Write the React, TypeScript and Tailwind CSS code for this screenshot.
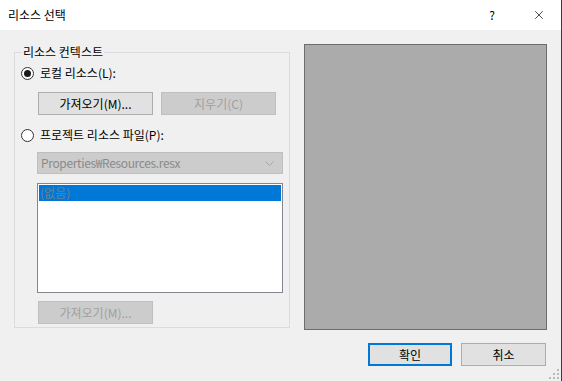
import { X } from 'lucide-react';

const font = { fontFamily: '"Noto Sans CJK KR", "Noto Sans", sans-serif' };

function Radio({ checked, label }: { checked?: boolean; label: string }) {
  return (
    <div className="flex items-center h-[16px] pl-[6px] gap-[6px]">
      <div className="w-[13px] h-[13px] rounded-full border border-[#333333] bg-white flex items-center justify-center">
        {checked && <div className="w-[7px] h-[7px] rounded-full bg-[#1a1a1a]" />}
      </div>
      <span className="text-[12px] leading-[16px] text-black">{label}</span>
    </div>
  );
}

function Btn({ label, disabled, primary, w }: { label: string; disabled?: boolean; primary?: boolean; w: string }) {
  const cls = disabled
    ? 'bg-[#cccccc] border border-[#bfbfbf] text-[#a0a0a0]'
    : primary
      ? 'bg-[#e1e1e1] border-2 border-[#0078d7] text-black'
      : 'bg-[#e1e1e1] border border-[#adadad] text-black';
  return (
    <div className={`${w} h-[23px] flex items-center justify-center text-[12px] leading-none ${cls}`}>
      {label}
    </div>
  );
}

export default function App() {
  return (
    <div className="w-[562px] h-[381px] bg-[#f0f0f0] border-r border-[#3a3a3a] flex flex-col relative" style={font}>
      <div className="h-[30px] bg-white flex items-center pl-[8px] shrink-0">
        <span className="text-[12px] text-black">리소스 선택</span>
        <div className="ml-auto flex items-center">
          <span className="text-[12px] text-black mr-[37px]">?</span>
          <X className="w-[14px] h-[14px] mr-[15px] text-black" strokeWidth={1.2} />
        </div>
      </div>

      <div className="flex pt-[14px] pl-[14px]">
        <fieldset className="w-[276px] h-[284px] border border-[#dcdcdc] p-0 m-0">
          <legend className="ml-[7px] px-[1px] text-[12px] leading-[16px] text-black">리소스 컨텍스트</legend>
          <div className="flex flex-col">
            <div className="mt-[5px]">
              <Radio checked label="로컬 리소스(L):" />
            </div>
            <div className="mt-[11px] pl-[23px] flex gap-[8px]">
              <Btn label="가져오기(M)..." w="w-[115px]" />
              <Btn label="지우기(C)" disabled w="w-[115px]" />
            </div>
            <div className="mt-[12px]">
              <Radio label="프로젝트 리소스 파일(P):" />
            </div>
            <div className="mt-[9px] ml-[22px] w-[246px] h-[22px] bg-[#cccccc] border border-[#bfbfbf] flex items-center pl-[3px] pr-[8px]">
              <span className="text-[12px] tracking-[-0.35px] text-[#8a8a8a]">Properties₩Resources.resx</span>
              <svg className="ml-auto" width="9" height="5" viewBox="0 0 9 5">
                <path d="M0.5 0.5 L4.5 4.5 L8.5 0.5" fill="none" stroke="#a6a6a6" strokeWidth="1" />
              </svg>
            </div>
            <div className="mt-[9px] ml-[22px] w-[246px] h-[110px] bg-white border border-[#828790] p-[1px]">
              <div className="h-[16px] bg-[#0078d7] flex items-center pl-[1px]">
                <span className="text-[12px] leading-[16px] text-[#6f7f90]">(없음)</span>
              </div>
            </div>
            <div className="mt-[8px] ml-[23px]">
              <Btn label="가져오기(M)..." disabled w="w-[115px]" />
            </div>
          </div>
        </fieldset>

        <div className="ml-[14px] w-[243px] h-[286px] bg-[#ababab] border border-[#6d6d6d]" />
      </div>

      <div className="mt-[13px] flex justify-end pr-[15px] gap-[9px]">
        <Btn label="확인" primary w="w-[84px]" />
        <Btn label="취소" w="w-[85px]" />
      </div>

      <svg className="absolute right-[1px] bottom-[1px]" width="12" height="12" viewBox="0 0 12 12">
        <rect x="9" y="1" width="2" height="2" fill="#b9b9b9" />
        <rect x="5" y="5" width="2" height="2" fill="#b9b9b9" />
        <rect x="9" y="5" width="2" height="2" fill="#b9b9b9" />
        <rect x="1" y="9" width="2" height="2" fill="#b9b9b9" />
        <rect x="5" y="9" width="2" height="2" fill="#b9b9b9" />
        <rect x="9" y="9" width="2" height="2" fill="#b9b9b9" />
      </svg>
    </div>
  );
}
